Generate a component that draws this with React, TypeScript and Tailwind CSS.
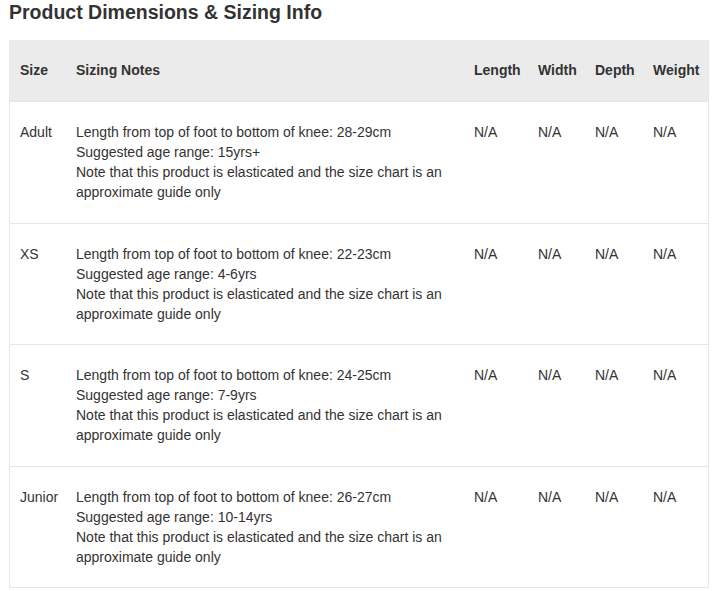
const rows = [
  { size: "Adult", length: "28-29cm", age: "15yrs+" },
  { size: "XS", length: "22-23cm", age: "4-6yrs" },
  { size: "S", length: "24-25cm", age: "7-9yrs" },
  { size: "Junior", length: "26-27cm", age: "10-14yrs" },
]

const cols = "grid grid-cols-[56px_398px_64px_57px_58px_66px]"

export default function App() {
  return (
    <div className="bg-white min-h-screen pl-[9px] pr-[5px] text-[#333] font-['Liberation_Sans',Arial,sans-serif]">
      <h2 className="text-[19.5px] font-bold leading-[24px] text-[#333]">Product Dimensions &amp; Sizing Info</h2>

      <div className="mt-[16px] border border-t-0 border-[#e6e6e6] w-[700px]">
        <div className={`${cols} bg-[#ebebeb] text-[14px] leading-[20px] font-bold pt-[20px] pb-[21px] border-b border-[#e6e6e6]`}>
          <div className="pl-[10px]">Size</div>
          <div className="pl-[10px]">Sizing Notes</div>
          <div className="pl-[10px]">Length</div>
          <div className="pl-[10px]">Width</div>
          <div className="pl-[10px]">Depth</div>
          <div className="pl-[10px]">Weight</div>
        </div>

        {rows.map((r, i) => (
          <div
            key={r.size}
            className={`${cols} text-[14px] leading-[20px] pt-[20px] pb-[20.5px] ${i < rows.length - 1 ? "border-b border-[#e6e6e6]" : ""}`}
          >
            <div className="pl-[10px]">{r.size}</div>
            <div className="pl-[10px] pr-[10px]">
              <p>Length from top of foot to bottom of knee: {r.length}</p>
              <p>Suggested age range: {r.age}</p>
              <p>Note that this product is elasticated and the size chart is an approximate guide only</p>
            </div>
            <div className="pl-[10px]">N/A</div>
            <div className="pl-[10px]">N/A</div>
            <div className="pl-[10px]">N/A</div>
            <div className="pl-[10px]">N/A</div>
          </div>
        ))}
      </div>
    </div>
  )
}
